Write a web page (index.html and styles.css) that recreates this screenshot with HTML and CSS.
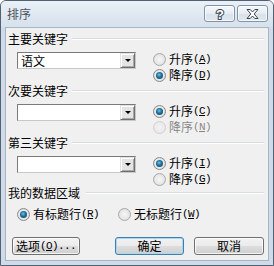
FILE: index.html
```html
<!DOCTYPE html>
<html lang="zh-CN">
<head>
<meta charset="utf-8">
<title>排序</title>
<link rel="stylesheet" href="styles.css">
</head>
<body>
<div class="window">
  <div class="titlebar">
    <span class="title">排序</span>
    <div class="tbtns">
      <span class="tbtn"><svg width="14" height="14" viewBox="0 0 14 14"><text x="7" y="12" text-anchor="middle" class="qmark">?</text></svg></span>
      <span class="tbtn"><svg width="13" height="10" viewBox="0 0 13 10"><polygon points="1,0.5 4.2,0.5 6.5,3 8.8,0.5 12,0.5 8.2,5 12,9.5 8.8,9.5 6.5,7 4.2,9.5 1,9.5 4.8,5" fill="#fff" stroke="#3a4552" stroke-width="1" stroke-linejoin="round"/></svg></span>
    </div>
  </div>
  <div class="client">
    <div class="group">
      <div class="hdr"><span>主要关键字</span><i class="rule"></i></div>
      <div class="row">
        <div class="combo"><span class="val">语文</span><span class="drop"><i class="tri"></i></span></div>
        <div class="radios">
          <div class="radio"><span class="dot"></span>升序<span class="k">(<u>A</u>)</span></div>
          <div class="radio on"><span class="dot"></span>降序<span class="k">(<u>D</u>)</span></div>
        </div>
      </div>
    </div>
    <div class="group">
      <div class="hdr"><span>次要关键字</span><i class="rule"></i></div>
      <div class="row">
        <div class="combo"><span class="val"></span><span class="drop"><i class="tri"></i></span></div>
        <div class="radios">
          <div class="radio on"><span class="dot"></span>升序<span class="k">(<u>C</u>)</span></div>
          <div class="radio faded"><span class="dot"></span>降序<span class="k">(<u>N</u>)</span></div>
        </div>
      </div>
    </div>
    <div class="group">
      <div class="hdr"><span>第三关键字</span><i class="rule"></i></div>
      <div class="row">
        <div class="combo"><span class="val"></span><span class="drop"><i class="tri"></i></span></div>
        <div class="radios">
          <div class="radio on"><span class="dot"></span>升序<span class="k">(<u>I</u>)</span></div>
          <div class="radio"><span class="dot"></span>降序<span class="k">(<u>G</u>)</span></div>
        </div>
      </div>
    </div>
    <div class="group last">
      <div class="hdr"><span>我的数据区域</span><i class="rule wide"></i></div>
      <div class="opts">
        <div class="radio on"><span class="dot"></span>有标题行<span class="k">(<u>R</u>)</span></div>
        <div class="radio second"><span class="dot"></span>无标题行<span class="k">(<u>W</u>)</span></div>
      </div>
    </div>
    <div class="buttons">
      <span class="btn options">选项<span class="k">(<u>O</u>)...</span></span>
      <span class="btn ok">确定</span>
      <span class="btn cancel">取消</span>
    </div>
  </div>
</div>
</body>
</html>
```
FILE: styles.css
```css
* { box-sizing: border-box; }
html, body { margin: 0; padding: 0; }
body {
  width: 274px;
  height: 266px;
  overflow: hidden;
  background: #ffffff;
  font-family: "Noto Sans CJK SC", "Liberation Sans", sans-serif;
  font-size: 12px;
  color: #000;
}
.window {
  width: 274px;
  height: 266px;
  display: flex;
  flex-direction: column;
  border: 1px solid #52606f;
  border-radius: 6px 6px 0 0;
  background: #cfdbe8;
  padding: 0 4px 4px;
}
.titlebar {
  height: 26px;
  flex: none;
  display: flex;
  justify-content: space-between;
  align-items: flex-start;
  margin: 0 -4px;
  padding: 0 5px 0 6px;
  border-radius: 5px 5px 0 0;
  background: linear-gradient(#eaf0f7, #d6e1ec);
}
.title {
  margin-top: 6px;
  line-height: 14px;
  color: #4a525c;
}
.tbtns {
  display: flex;
  gap: 2px;
  margin-top: 4px;
}
.tbtn {
  width: 31px;
  height: 17px;
  border: 1px solid #8193a6;
  border-radius: 3px;
  background: linear-gradient(#f7f9fb, #e6ecf2 50%, #d9e1ea 51%, #dfe7ef);
  box-shadow: inset 0 0 0 1px rgba(255,255,255,0.7);
  display: flex;
  align-items: center;
  justify-content: center;
}
.qmark {
  font-family: "Liberation Sans", sans-serif;
  font-weight: bold;
  font-size: 13px;
  fill: #fff;
  stroke: #3a4552;
  stroke-width: 2px;
  paint-order: stroke;
}
.client {
  flex: 1;
  background: #f0f0f0;
  border: 1px solid #a6b5c6;
  padding: 4px 4px 0 2px;
}
.group { margin-bottom: 1px; }
.group.last { margin-top: -2px; }
.hdr {
  display: flex;
  align-items: center;
  height: 14px;
  line-height: 14px;
}
.rule {
  flex: 1;
  height: 2px;
  margin-left: 4px;
  border-top: 1px solid #d7dde3;
  border-bottom: 1px solid #ffffff;
}
.rule.wide { margin-left: 6px; }
.row {
  display: flex;
  height: 32px;
  margin-top: 5px;
}
.combo {
  width: 119px;
  height: 17px;
  margin: 1px 0 0 9px;
  border: 1px solid #7a7a7a;
  border-right-color: #c8c8c8;
  border-bottom-color: #c8c8c8;
  background: #fff;
  display: flex;
  align-items: center;
  justify-content: space-between;
}
.val {
  padding-left: 3px;
  line-height: 14px;
}
.drop {
  width: 15px;
  height: 15px;
  border: 1px solid #e2e2e2;
  border-right-color: #6f6f6f;
  border-bottom-color: #6f6f6f;
  background: #e4e4e4;
  box-shadow: inset 1px 1px 0 #fff, inset -1px -1px 0 #a8a8a8;
  display: flex;
  align-items: center;
  justify-content: center;
}
.tri {
  width: 0;
  height: 0;
  border-left: 3px solid transparent;
  border-right: 3px solid transparent;
  border-top: 3px solid #000;
}
.radios {
  margin-left: 17px;
  display: flex;
  flex-direction: column;
}
.radio {
  display: flex;
  align-items: center;
  height: 16px;
  line-height: 14px;
  white-space: nowrap;
}
.dot {
  width: 13px;
  height: 13px;
  margin-right: 3px;
  border-radius: 50%;
  border: 1px solid #a9a9a9;
  background: radial-gradient(circle at 50% 50%, #f6f6f6 0, #e6e6e6 60%, #d2d2d2 100%);
  display: flex;
  align-items: center;
  justify-content: center;
}
.radio.on .dot {
  border-color: #8a8a8a;
}
.radio.on .dot::after {
  content: "";
  width: 7px;
  height: 7px;
  border-radius: 50%;
  background: radial-gradient(circle at 45% 40%, #6fc3e8 0, #1d6d98 45%, #173f5c 100%);
}
.radio.faded { opacity: 0.45; }
.k {
  font-family: "Liberation Mono", monospace;
  font-size: 11px;
  letter-spacing: -0.6px;
}
.opts {
  display: flex;
  height: 16px;
  margin-top: 6px;
  padding-left: 9px;
}
.radio.second { margin-left: 19px; }
.buttons {
  display: flex;
  margin-top: 15px;
}
.btn {
  height: 18px;
  border: 1px solid #707070;
  border-radius: 3px;
  background: linear-gradient(#f2f2f2, #ebebeb 50%, #dddddd 51%, #cfcfcf);
  box-shadow: inset 0 0 0 1px rgba(255,255,255,0.75);
  display: flex;
  align-items: center;
  justify-content: center;
  line-height: 14px;
}
.btn.options {
  width: 68px;
  margin-left: 4px;
  justify-content: flex-start;
  padding-left: 3px;
}
.btn.ok {
  width: 69px;
  margin-left: 35px;
  border-color: #3c7fb1;
  box-shadow: inset 0 0 0 1px #a9d8f2;
}
.btn.cancel {
  width: 70px;
  margin-left: 10px;
}
```
